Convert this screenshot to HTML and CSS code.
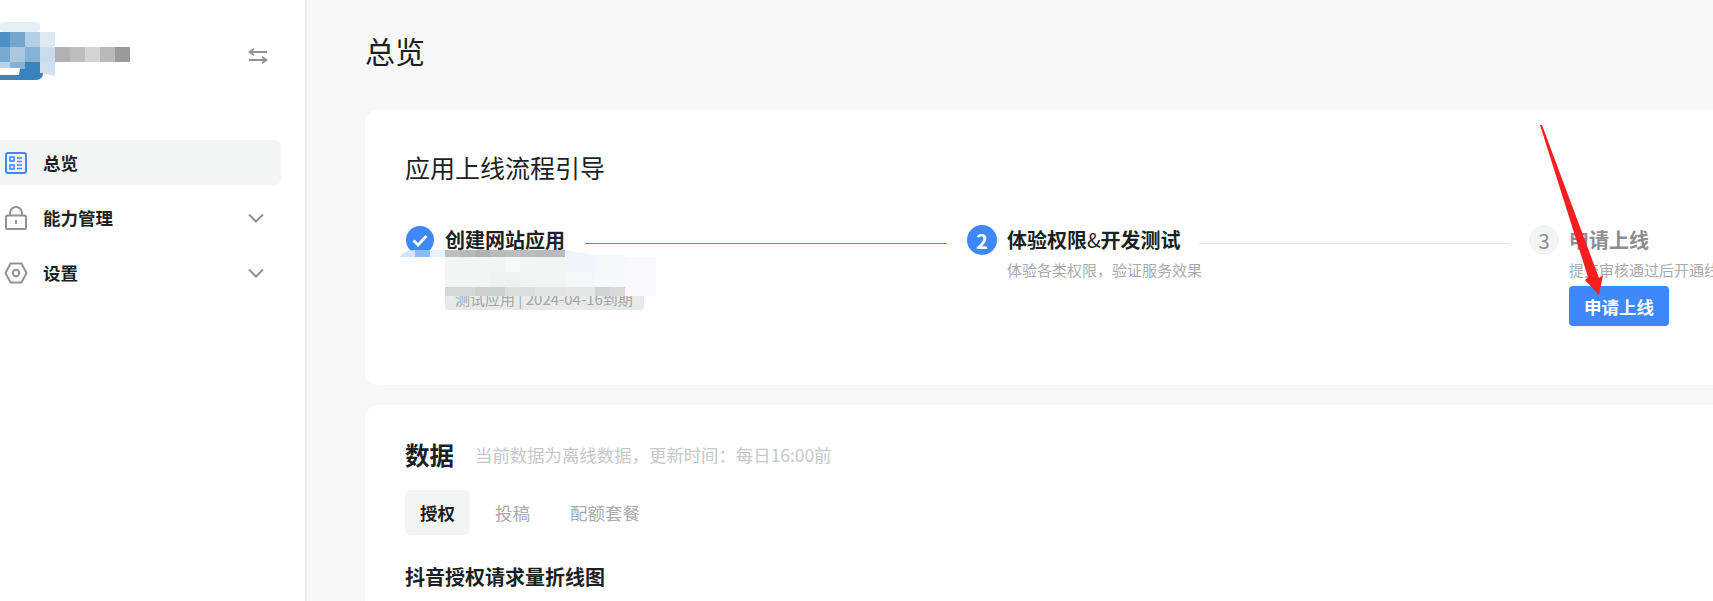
FILE: index.html
```html
<!DOCTYPE html>
<html lang="zh-CN">
<head>
<meta charset="utf-8">
<title>总览</title>
<link rel="stylesheet" href="styles.css">
</head>
<body>
<div class="app">
  <aside class="sidebar">
    <div class="brand">
      <svg class="logo" width="130" height="60" viewBox="0 0 130 60">
        <path fill="#3a83bf" d="M0 40h43v11q0 7-7 7H0z"/>
        <rect x="0" y="0" width="40" height="10" rx="3" fill="#e8f0f7"/>
        <rect x="0" y="10" width="10" height="15" fill="#4d90c5"/><rect x="10" y="10" width="15" height="15" fill="#72a6cf"/><rect x="25" y="10" width="15" height="15" fill="#b5cfe5"/><rect x="40" y="10" width="15" height="15" fill="#dde9f3"/>
        <rect x="0" y="25" width="10" height="15" fill="#7aa9d0"/><rect x="10" y="25" width="15" height="15" fill="#a9c7e0"/><rect x="25" y="25" width="15" height="15" fill="#85b1d5"/><rect x="40" y="25" width="15" height="15" fill="#c9dcec"/>
        <rect x="55" y="25" width="15" height="15" fill="#b2b2b2"/><rect x="70" y="25" width="15" height="15" fill="#bdbdbd"/><rect x="85" y="25" width="15" height="15" fill="#d3d3d3"/><rect x="100" y="25" width="15" height="15" fill="#b9b9b9"/><rect x="115" y="25" width="15" height="15" fill="#9a9a9a"/>
        <rect x="0" y="40" width="10" height="6" fill="#b8d2e6"/><rect x="10" y="40" width="15" height="7" fill="#85b2d6"/>
        <path fill="#fff" d="M0 46h20l-1 7H0z"/>
        <path fill="#cfe1ef" d="M40 40h15v14l-12-3h-3z"/>
      </svg>
      <svg class="swap" width="20" height="16" viewBox="0 0 20 16" fill="none" stroke="#8f9396" stroke-width="1.8">
        <path d="M19 4H2M6 .8 1.6 4 6 7.2"/>
        <path d="M1 12h17M14 8.800 18.400 12 14 15.200"/>
      </svg>
    </div>
    <nav class="nav">
      <a class="nav-item active">
        <svg class="nav-icon" width="22" height="22" viewBox="0 0 22 22" fill="none" stroke="#3f88fb" stroke-width="2">
          <rect x="1" y="1" width="20" height="20" rx="2"/>
          <rect x="5" y="5" width="4" height="4" stroke-width="1.600"/>
          <rect x="5" y="13" width="4" height="4" stroke-width="1.600"/>
          <path d="M12 6h5M12 9.500h5M12 13h5M12 16.500h5" stroke-width="1.600"/>
        </svg>
        <span>总览</span>
      </a>
      <a class="nav-item">
        <svg class="nav-icon" width="22" height="24" viewBox="0 0 22 24" fill="none" stroke="#8f9396" stroke-width="2">
          <rect x="1" y="9.500" width="20" height="13.500" rx="1.500"/>
          <path d="M5 9.500V7a6 6 0 0 1 12 0v2.500"/>
          <path d="M11 14v4"/>
        </svg>
        <span>能力管理</span>
        <svg class="chevron" width="16" height="10" viewBox="0 0 16 10" fill="none" stroke="#8f9396" stroke-width="2"><path d="M1 1.500 8 8.500 15 1.500"/></svg>
      </a>
      <a class="nav-item">
        <svg class="nav-icon hex" width="24" height="22" viewBox="0 0 24 22" fill="none" stroke="#8f9396" stroke-width="2">
          <path d="M1.500 11 6.500 1.500h11L22.500 11l-5 9.500h-11z"/>
          <circle cx="12" cy="11" r="3.200"/>
        </svg>
        <span>设置</span>
        <svg class="chevron" width="16" height="10" viewBox="0 0 16 10" fill="none" stroke="#8f9396" stroke-width="2"><path d="M1 1.500 8 8.500 15 1.500"/></svg>
      </a>
    </nav>
  </aside>
  <main class="main">
    <h1 class="page-title">总览</h1>
    <section class="card guide">
      <h2 class="card-title">应用上线流程引导</h2>
      <div class="steps">
        <div class="step">
          <div class="step-head">
            <span class="step-dot done">
              <svg width="16" height="13" viewBox="0 0 16 13" fill="none" stroke="#fff" stroke-width="2.800"><path d="M1.500 6.500 6 11 14.500 2"/></svg>
            </span>
            <span class="step-name">创建网站应用</span>
            <span class="step-line blue"></span>
          </div>
          <div class="step-body">
            <div class="app-tag">测试应用 | 2024-04-16到期</div>
          </div>
          <svg class="mosaic" width="256" height="52" viewBox="0 0 256 52">
            <path fill="#d3e3fb" d="M0 7q4-7 15-7v7z"/>
            <rect x="15" y="0" width="15" height="7" fill="#8fbaf8"/>
            <rect x="30" y="0" width="15" height="7" fill="#e9f1fd"/>
            <rect x="45" y="0" width="15" height="7" fill="#bdbfbf"/><rect x="60" y="0" width="15" height="7" fill="#b7b9b9"/><rect x="75" y="0" width="15" height="7" fill="#b0b2b2"/><rect x="90" y="0" width="15" height="7" fill="#b9bbbb"/><rect x="105" y="0" width="15" height="7" fill="#bcbebe"/><rect x="120" y="0" width="15" height="7" fill="#bcbebe"/><rect x="135" y="0" width="30" height="7" fill="#b9bbbb"/>
            <rect x="45" y="7" width="120" height="30" fill="#f3f4f4"/>
            <rect x="105" y="7" width="15" height="15" fill="#f8f9f9"/>
            <rect x="90" y="22" width="30" height="15" fill="#f0f1f1"/>
            <path fill="#f1f4fc" d="M165 0l30 5v17h-30z"/>
            <rect x="165" y="22" width="30" height="15" fill="#f5f6f7"/>
            <path fill="#f6f8fc" d="M195 5h30v32h-30z"/>
            <path fill="#f9f9fb" d="M225 7h31v39h-31z"/>
            <rect x="45" y="37" width="30" height="9" fill="#d6d8d8"/><rect x="75" y="37" width="30" height="9" fill="#cfd1d1"/><rect x="105" y="37" width="30" height="9" fill="#dcdddd"/><rect x="135" y="37" width="30" height="9" fill="#e2e3e3"/><rect x="165" y="37" width="30" height="9" fill="#e4e5e5"/><rect x="195" y="37" width="15" height="9" fill="#d2d4d4"/><rect x="210" y="37" width="15" height="9" fill="#d9dbdb"/>
          </svg>
        </div>
        <div class="step">
          <div class="step-head">
            <span class="step-dot current">2</span>
            <span class="step-name">体验权限<span class="amp">&amp;</span>开发测试</span>
            <span class="step-line"></span>
          </div>
          <div class="step-body">
            <p class="step-desc">体验各类权限，验证服务效果</p>
          </div>
        </div>
        <div class="step last">
          <div class="step-head">
            <span class="step-dot todo">3</span>
            <span class="step-name muted">申请上线</span>
          </div>
          <div class="step-body">
            <p class="step-desc">提交审核通过后开通线上权限</p>
            <button class="primary">申请上线</button>
          </div>
        </div>
      </div>
    </section>
    <section class="card data">
      <div class="data-head">
        <h2 class="data-title">数据</h2>
        <span class="data-note">当前数据为离线数据，更新时间：每日16:00前</span>
      </div>
      <div class="tabs">
        <span class="tab active">授权</span>
        <span class="tab">投稿</span>
        <span class="tab">配额套餐</span>
      </div>
      <h3 class="chart-title">抖音授权请求量折线图</h3>
    </section>
  </main>
</div>
<svg class="arrow" width="70" height="180" viewBox="0 0 70 180">
  <path fill="#fb1e1e" d="M0 0H2L59 153 63 150 59 170 45 155 48 152z"/>
</svg>
</body>
</html>
```

FILE: styles.css
```css
* { box-sizing: border-box; }
html, body { margin: 0; height: 100%; }
body {
  position: relative;
  width: 1713px;
  height: 601px;
  overflow: hidden;
  background: #f8f8f8;
  color: #1c1f23;
  font-family: "Noto Sans CJK SC", "Noto Sans", sans-serif;
}
.app { display: flex; height: 601px; }

.sidebar {
  flex: 0 0 307px;
  padding-right: 24px;
  background: #fff;
  border-right: 2px solid #ebebeb;
}
.brand {
  display: flex;
  justify-content: space-between;
  height: 140px;
  padding: 22px 13px 0 0;
}
.logo { display: block; }
.swap { margin: 26px 0 0; }
.nav { display: flex; flex-direction: column; gap: 10px; }
.nav-item {
  display: flex;
  align-items: center;
  height: 45px;
  padding-left: 5px;
  border-radius: 0 6px 6px 0;
  font-size: 17.500px;
  font-weight: 700;
  color: #1c1f23;
}
.nav-item.active { background: #f3f5f4; }
.nav-icon { flex: none; margin-right: 16px; }
.nav-icon.hex { margin-left: -1px; margin-right: 15px; }
.chevron { margin-left: auto; margin-right: 17px; }

.main { flex: 1; min-width: 0; padding-left: 58px; }
.page-title {
  margin: 0;
  height: 110px;
  padding-top: 29px;
  font-size: 30px;
  line-height: 42px;
  font-weight: 400;
}
.card { width: 1400px; background: #fff; border-radius: 14px 0 0 14px; }
.guide { height: 275px; padding: 39px 0 0 40px; }
.card-title { margin: 0; font-size: 25px; line-height: 36px; font-weight: 400; }

.steps { display: flex; margin-top: 38px; }
.step { position: relative; flex: 0 0 562px; padding-right: 20px; }
.step.last { flex: 1; padding-right: 0; }
.step-head { display: flex; align-items: center; height: 34px; }
.step-dot {
  flex: none;
  display: flex;
  align-items: center;
  justify-content: center;
  width: 30px;
  height: 30px;
  margin-right: 10px;
  border-radius: 50%;
  font-size: 20px;
  font-weight: 700;
}
.step-dot.done { width: 28px; height: 28px; margin: 0 11px 0 1px; background: #3f88fb; }
.step-dot.current { background: #3f88fb; color: #fff; }
.step-dot.todo { background: #f3f5f4; color: #8b8e90; font-weight: 400; }
.step-name { font-size: 20px; line-height: 28px; font-weight: 700; white-space: nowrap; }
.step-name.muted { color: #8b8e90; }
.amp { font-weight: 400; }
.step-line { flex: 1; height: 1px; margin: 6px 0 0 18px; background: #e3e4e4; }
.step-line.blue { margin-left: 20px; background: #4a8de8; }
.step-body { padding: 2px 0 0 40px; }
.step-desc {
  margin: 0;
  font-size: 15px;
  line-height: 22px;
  color: #a9abad;
  white-space: nowrap;
}
.app-tag {
  width: 199px;
  height: 24px;
  margin-top: 27px;
  padding-left: 10px;
  border-radius: 4px;
  background: #e8e9e9;
  font-size: 15px;
  line-height: 25px;
  color: #a4a6a7;
  white-space: nowrap;
}
.mosaic { position: absolute; left: -5px; top: 27px; }
.primary {
  display: block;
  width: 100px;
  height: 40px;
  margin-top: 5px;
  padding: 0;
  border: 0;
  border-radius: 4px;
  background: #3f88fb;
  color: #fff;
  font: 700 17.500px "Noto Sans CJK SC", sans-serif;
}

.data { height: 300px; margin-top: 20px; padding: 30px 0 0 40px; }
.data-head { display: flex; align-items: center; height: 40px; }
.data-title { margin: 0; font-size: 24.500px; line-height: 36px; font-weight: 700; }
.data-note { margin-left: 21px; font-size: 17.400px; line-height: 26px; color: #c6c8c9; }
.tabs { display: flex; gap: 10px; margin-top: 15px; }
.tab {
  height: 45px;
  padding: 0 15px;
  font-size: 17.500px;
  line-height: 45px;
  color: #a9abad;
}
.tab.active {
  border-radius: 6px;
  background: #f3f5f4;
  color: #1c1f23;
  font-weight: 700;
}
.chart-title { margin: 27px 0 0; font-size: 20px; line-height: 30px; font-weight: 700; }

.arrow { position: absolute; left: 1540px; top: 125px; }
```
